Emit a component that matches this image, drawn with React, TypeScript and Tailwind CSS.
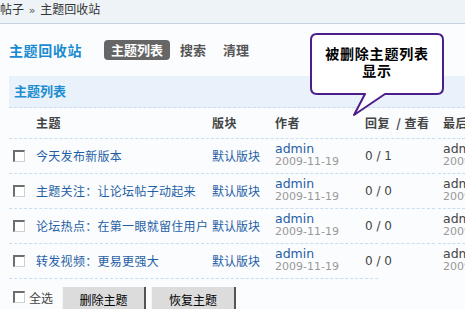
import React from "react";

const cjk = { fontFamily: '"Noto Sans CJK SC", "Noto Sans", sans-serif' };
const latin = { fontFamily: '"DejaVu Sans", "Noto Sans CJK SC", sans-serif' };

interface Topic {
  title: string;
  forum: string;
  author: string;
  date: string;
  replies: number;
  views: number;
}

const topics: Topic[] = [
  { title: "今天发布新版本", forum: "默认版块", author: "admin", date: "2009-11-19", replies: 0, views: 1 },
  { title: "主题关注：让论坛帖子动起来", forum: "默认版块", author: "admin", date: "2009-11-19", replies: 0, views: 0 },
  { title: "论坛热点：在第一眼就留住用户", forum: "默认版块", author: "admin", date: "2009-11-19", replies: 0, views: 0 },
  { title: "转发视频：更易更强大", forum: "默认版块", author: "admin", date: "2009-11-19", replies: 0, views: 0 },
];

const Checkbox = () => (
  <span className="block w-[12px] h-[12px] bg-white border-t-2 border-l-2 border-[#6e6e6e] border-b border-r border-b-[#cfcfcf] border-r-[#cfcfcf]" />
);

// dashed row divider, broken into cell segments like the original table
const Divider = ({ short }: { short?: boolean }) => (
  <div className="flex h-px w-[456px]">
    <div className="shrink-0 w-[195px] border-b border-dashed border-[#c8dcf2]" />
    <div className="shrink-0 ml-[2px] w-[172px] border-b border-dashed border-[#c8dcf2]" />
    {!short && (
      <>
        <div className="shrink-0 ml-[3px] w-[54px] border-b border-dashed border-[#c8dcf2]" />
        <div className="ml-[3px] flex-1 border-b border-dashed border-[#c8dcf2]" />
      </>
    )}
  </div>
);

export default function App() {
  return (
    <div className="relative w-[465px] h-[309px] overflow-hidden bg-[#fbfcfd] text-[#333]" style={cjk}>
      {/* Breadcrumb */}
      <div className="h-[24px] bg-[#eef3f8] border-b border-[#c6d3de] flex items-center">
        <span className="text-[12px] leading-[14px] text-[#333] -mt-[4px] whitespace-nowrap">
          帖子 <span style={latin} className="text-[11px] text-[#555] mx-[2px]">»</span> 主题回收站
        </span>
      </div>

      <div className="pl-[9px]">
        {/* Title + tabs */}
        <div className="mt-[16px] flex items-center h-[20px]">
          <h1 className="text-[14px] leading-[20px] font-bold text-[#1a8bd0] tracking-[0.6px] -mt-[1px]">主题回收站</h1>
          <div className="ml-[22px] flex items-center gap-[3px]">
            <span className="px-[7px] h-[20px] leading-[20px] rounded-[4px] bg-[#666] text-white text-[13px] font-bold">主题列表</span>
            <span className="px-[7px] h-[20px] leading-[20px] text-[#555] text-[13px] font-bold">搜索</span>
            <span className="px-[7px] h-[20px] leading-[20px] text-[#555] text-[13px] font-bold">清理</span>
          </div>
        </div>

        {/* Section bar */}
        <div className="mt-[16px] h-[32px] bg-[#e9f1fa] border-b border-dashed border-[#c8dcf2] flex items-center pl-[5px]">
          <span className="text-[13px] font-bold text-[#1b8ed2] -mt-[2px]">主题列表</span>
        </div>

        {/* Header row */}
        <div className="flex items-center h-[30px] w-[560px] text-[12px] font-bold text-[#444] tracking-[0.5px]">
          <div className="shrink-0 w-[27px]" />
          <div className="shrink-0 w-[176px]">主题</div>
          <div className="shrink-0 w-[63px]">版块</div>
          <div className="shrink-0 w-[90px]">作者</div>
          <div className="shrink-0 w-[78px] whitespace-nowrap">回复 <span className="ml-[3px]">/ 查看</span></div>
          <div className="shrink-0 whitespace-nowrap">最后发表</div>
        </div>
        <Divider />

        {topics.map((t, i) => (
          <div key={i}>
            <div className="flex items-center h-[34px] w-[560px]">
              <div className="shrink-0 w-[27px] pl-[4px]">
                <Checkbox />
              </div>
              <div className="shrink-0 w-[176px] text-[12px] text-[#1f5fa6] whitespace-nowrap tracking-[0.3px]">{t.title}</div>
              <div className="shrink-0 w-[63px] text-[12px] text-[#1f5fa6] whitespace-nowrap">{t.forum}</div>
              <div className="shrink-0 w-[90px] -mt-[3px]" style={latin}>
                <div className="text-[12.5px] leading-[13px] text-[#1f5fa6]">{t.author}</div>
                <div className="text-[11px] leading-[13px] text-[#999]">{t.date}</div>
              </div>
              <div className="shrink-0 w-[78px] text-[12px] text-[#444] whitespace-nowrap" style={latin}>
                {t.replies} / {t.views}
              </div>
              <div className="shrink-0 -mt-[3px] whitespace-nowrap" style={latin}>
                <div className="text-[12.5px] leading-[13px] text-[#444]">{t.author}</div>
                <div className="text-[11px] leading-[13px] text-[#999]">{t.date}</div>
              </div>
            </div>
            <Divider short={i === topics.length - 1} />
          </div>
        ))}

        {/* Footer actions */}
        <div className="mt-[8px] flex items-start">
          <div className="pl-[4px] pt-[4px]">
            <Checkbox />
          </div>
          <span className="ml-[4px] mt-[2px] text-[12px] leading-[18px] text-[#444]">全选</span>
          <button className="ml-[9px] w-[84px] h-[26px] bg-[#dcdcdc] border-l border-l-[#f4f4f4] border-r-2 border-r-[#555] text-[12px] text-black">
            删除主题
          </button>
          <button className="ml-[5px] w-[85px] h-[26px] bg-[#dcdcdc] border-l border-l-[#f4f4f4] border-r-2 border-r-[#555] text-[12px] text-black">
            恢复主题
          </button>
        </div>
      </div>

      {/* Callout bubble */}
      <div className="absolute left-[305px] top-[30px] w-[145px] h-[90px]">
        <svg width="145" height="90" viewBox="0 0 145 90" className="absolute inset-0">
          <path
            d="M12 4 H132 Q138 4 138 10 V58 Q138 64 132 64 H80 L49 85 L60 64 H12 Q6 64 6 58 V10 Q6 4 12 4 Z"
            fill="#ffffff"
            stroke="#4b1e8c"
            strokeWidth="2"
            strokeLinejoin="round"
          />
        </svg>
        <div className="absolute left-[6px] top-[15px] w-[132px] text-center text-[14px] leading-[17px] font-bold text-black tracking-[0.8px]">
          被删除主题列表
          <br />
          显示
        </div>
      </div>
    </div>
  );
}
